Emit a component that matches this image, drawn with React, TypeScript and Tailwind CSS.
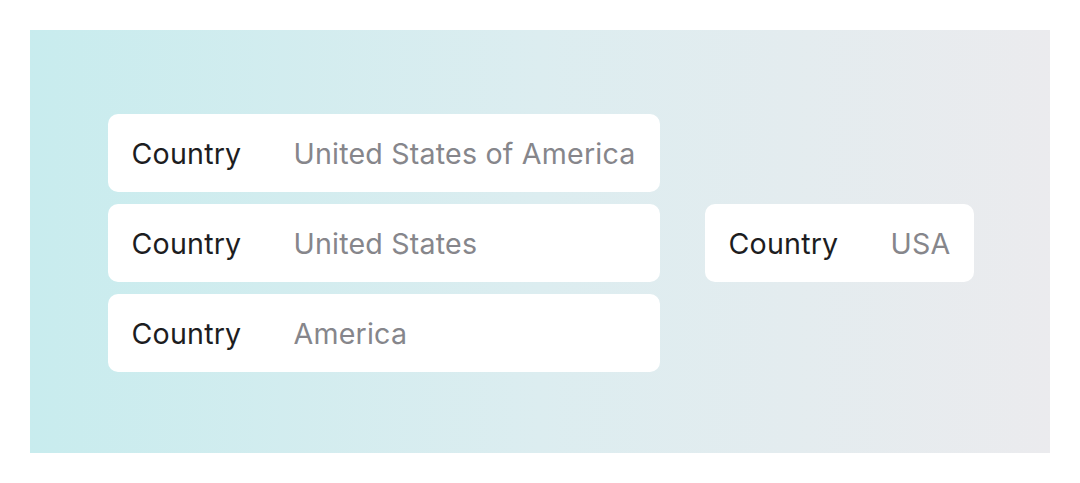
const rows = ["United States of America", "United States", "America"];

const Field = ({ value, wide }: { value: string; wide?: boolean }) => (
  <div
    className={`flex items-center h-[78px] bg-white rounded-[10px] px-6 pt-[3px] ${
      wide ? "w-[552px]" : ""
    }`}
  >
    <span className="w-[162px] shrink-0 text-[#1d1d1f]">Country</span>
    <span className="text-[#86868b]">{value}</span>
  </div>
);

export default function App() {
  return (
    <div className="w-[1080px] h-[483px] bg-white p-[30px] font-['Inter','Liberation_Sans',sans-serif]">
      <div className="w-[1020px] h-[423px] bg-gradient-to-r from-[#c8ecee] via-[#dcedf0] to-[#ebebee] flex items-center justify-center gap-[45px] text-[28.6px] tracking-[0.2px] pt-[2px] pl-[2px]">
        <div className="flex flex-col gap-3">
          {rows.map((r) => (
            <Field key={r} value={r} wide />
          ))}
        </div>
        <Field value="USA" />
      </div>
    </div>
  );
}
